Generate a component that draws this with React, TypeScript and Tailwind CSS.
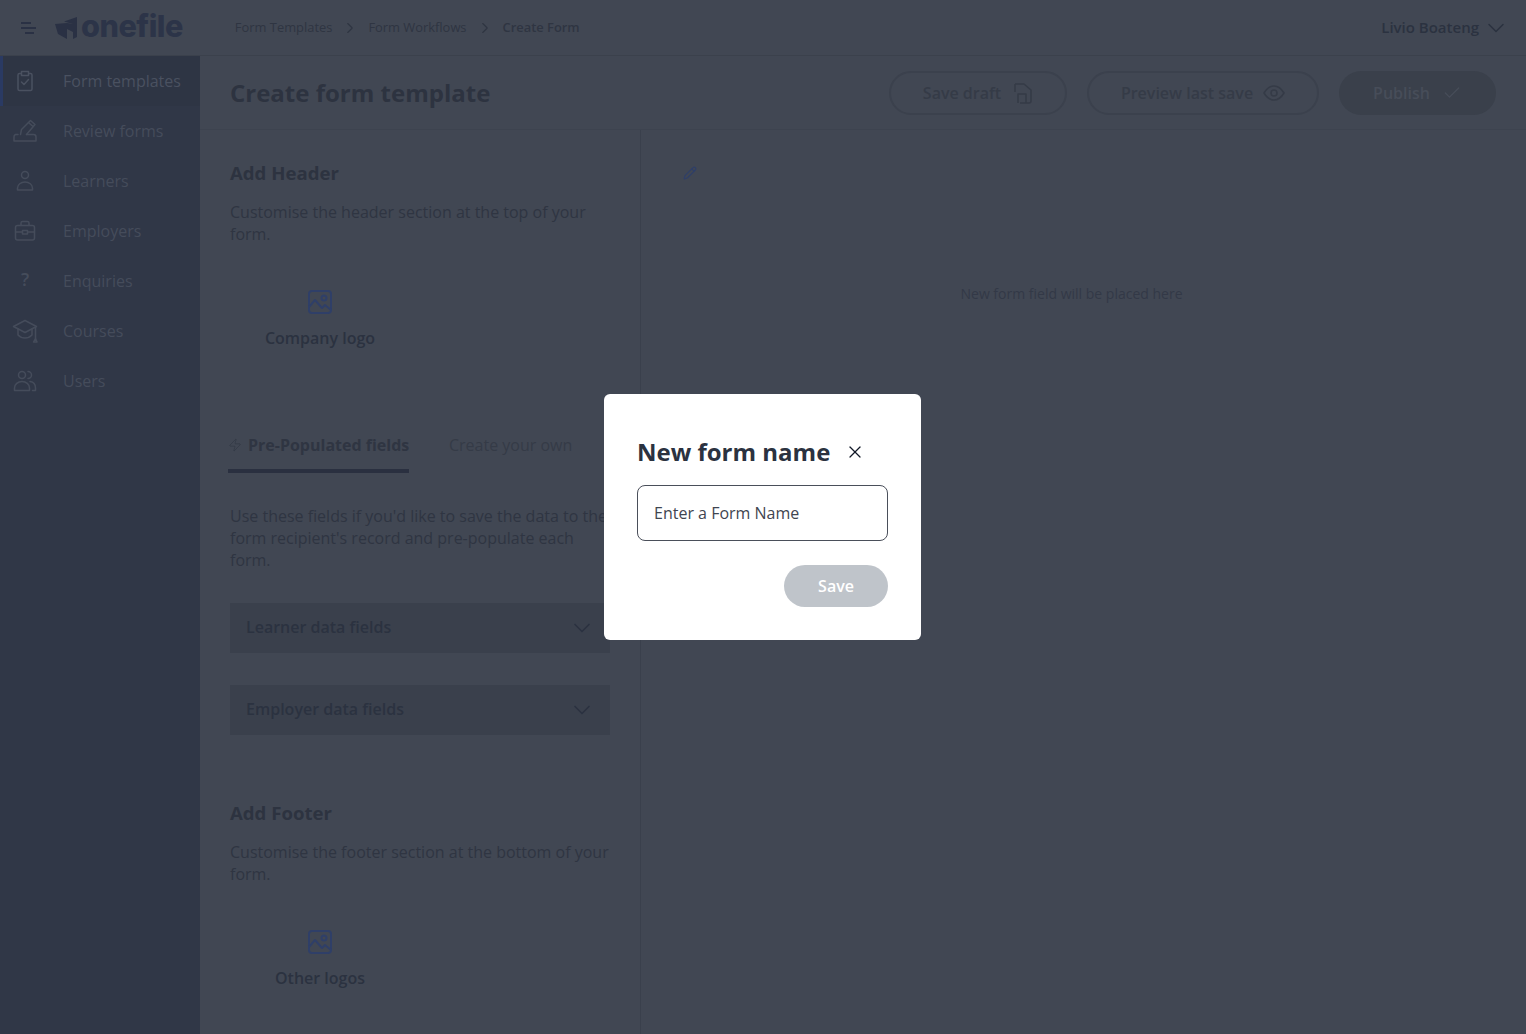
import React from 'react';
import { Check, ChevronDown, ChevronRight, Pencil, X, Zap } from 'lucide-react';

const navItems = [
  { label: 'Form templates', icon: <ClipboardIcon />, active: true },
  { label: 'Review forms', icon: <ReviewIcon />, active: false },
  { label: 'Learners', icon: <LearnerIcon />, active: false },
  { label: 'Employers', icon: <BriefcaseIcon />, active: false },
  { label: 'Enquiries', icon: <span className="mt-[-4px] text-[18px] font-semibold leading-none">?</span>, active: false },
  { label: 'Courses', icon: <CapIcon />, active: false },
  { label: 'Users', icon: <UsersIcon />, active: false },
];

function ClipboardIcon() {
  return (
    <svg width="24" height="24" viewBox="0 0 24 24" fill="none" stroke="currentColor" strokeWidth="1.5" strokeLinejoin="round" strokeLinecap="round">
      <path d="M8 4.500H6.500A1.500 1.500 0 0 0 5 6v14a1.500 1.500 0 0 0 1.500 1.500h11A1.500 1.500 0 0 0 19 20V6a1.500 1.500 0 0 0-1.500-1.500H16" />
      <path d="M8.500 2.500h7V6.500h-7z" />
      <path d="M8.500 13l2.500 2.500 4.500-5" />
    </svg>
  );
}

function ReviewIcon() {
  return (
    <svg width="24" height="24" viewBox="0 0 24 24" fill="none" stroke="currentColor" strokeWidth="1.5" strokeLinejoin="round" strokeLinecap="round">
      <path d="M7.500 15.500l1-5L17.500 1.500l4.500 4-8.500 10" />
      <path d="M15.500 3.500l4.500 4" />
      <path d="M5 15.500H2.500a2.500 2.500 0 0 0-1.500 2.500V22h22v-4a2.500 2.500 0 0 0-2.500-2.500h-7" />
    </svg>
  );
}

function LearnerIcon() {
  return (
    <svg width="24" height="24" viewBox="0 0 24 24" fill="none" stroke="currentColor" strokeWidth="1.5" strokeLinejoin="round">
      <circle cx="12" cy="6" r="3.500" />
      <path d="M4.500 21v-2a7.500 6 0 0 1 15 0v2z" />
    </svg>
  );
}

function BriefcaseIcon() {
  return (
    <svg width="24" height="24" viewBox="0 0 24 24" fill="none" stroke="currentColor" strokeWidth="1.5" strokeLinejoin="round" strokeLinecap="round">
      <rect x="2.500" y="6.500" width="19" height="14.500" rx="2" />
      <path d="M8 6.500V4a1.500 1.500 0 0 1 1.500-1.500h5A1.500 1.500 0 0 1 16 4v2.500" />
      <path d="M2.500 13h6.500M15 13h6.500" />
      <path d="M9.500 11.500h5v3.500h-5z" />
    </svg>
  );
}

function CapIcon() {
  return (
    <svg width="26" height="26" viewBox="0 0 26 26" fill="none" stroke="currentColor" strokeWidth="1.5" strokeLinejoin="round" strokeLinecap="round">
      <path d="M13 2.500 1.500 8.500 13 14.500l11.500-6z" />
      <path d="M6 11v6c2 2 4.500 3 7 3s5-1 7-3v-6" />
      <path d="M23.500 9.500v11" />
      <path d="M21.500 24l2-3.500 1.500 3.500z" />
    </svg>
  );
}

function UsersIcon() {
  return (
    <svg width="24" height="24" viewBox="0 0 24 24" fill="none" stroke="currentColor" strokeWidth="1.5" strokeLinejoin="round" strokeLinecap="round">
      <circle cx="9" cy="6" r="3.500" />
      <path d="M15 2.500a3.500 3.500 0 0 1 0 7" />
      <path d="M1.500 21.500V19a7.500 6.500 0 0 1 15 0v2.500z" />
      <path d="M17 12.500c3.500.5 5.500 3 5.500 6.500v2.500h-3" />
    </svg>
  );
}

function Logo() {
  return (
    <div className="flex items-center">
      <svg width="24" height="22" viewBox="0 0 24 22" className="mr-[2px]">
        <path d="M0 7l12-1v16L3 17z" fill="#2a3144" />
        <path d="M9 4.500 22 0v20l-4 2V7z" fill="#2a3144" />
        <path d="M12 6l6 1v8l-6-3z" fill="#2a3144" />
      </svg>
      <span className="mt-[-2px] text-[30.600px] font-extrabold leading-none tracking-[-0.5px] text-[#2c3448] [font-family:Inter,sans-serif]">onefile</span>
    </div>
  );
}

function ImageIcon() {
  return (
    <svg width="26" height="26" viewBox="0 0 26 26" fill="none" stroke="#2f3f68" strokeWidth="2" strokeLinejoin="round">
      <rect x="2" y="2" width="22" height="22" rx="3" />
      <circle cx="17" cy="9" r="2.500" />
      <path d="M2 18l6-7 7 8 3-3 6 5" />
    </svg>
  );
}

function DraftIcon() {
  return (
    <svg width="20" height="22" viewBox="0 0 20 22" fill="none" stroke="currentColor" strokeWidth="1.600" strokeLinejoin="round">
      <path d="M2 2h9l7 6v11a2 2 0 0 1-2 2H7" />
      <path d="M5 21V12h8v9" />
      <path d="M2 2v8" />
    </svg>
  );
}

function EyeIcon() {
  return (
    <svg width="22" height="18" viewBox="0 0 22 18" fill="none" stroke="currentColor" strokeWidth="1.600">
      <path d="M1 9c3-5 6-7 10-7s7 2 10 7c-3 5-6 7-10 7S4 14 1 9z" />
      <circle cx="11" cy="9" r="3" />
    </svg>
  );
}

function Accordion({ label }: { label: string }) {
  return (
    <div className="flex h-[50px] w-[380px] items-center justify-between bg-[#3a404c] pl-4 pr-[14px]">
      <span className="mt-[-2px] font-semibold text-[#2b3240]">{label}</span>
      <ChevronDown size={28} strokeWidth={1.500} className="text-[#2b3240]" />
    </div>
  );
}

export default function App() {
  return (
    <div className="relative flex h-[1034px] w-[1526px] flex-col overflow-hidden bg-[#414753] text-[16px] text-[#2f3542] [font-family:'Open_Sans',sans-serif]">
      <header className="flex h-[56px] shrink-0 items-center border-b border-[#3b414c] pl-5 pr-[16px]">
        <svg width="16" height="14" viewBox="0 0 16 14" stroke="#2a3144" strokeWidth="2" className="mr-[19px]">
          <path d="M1 2h10M1 7h15M5 12h9" />
        </svg>
        <Logo />
        <nav className="ml-[52px] mt-[1px] flex items-center text-[12.900px] text-[#2f3542]">
          <span>Form Templates</span>
          <ChevronRight size={18} strokeWidth={1.500} className="mx-[9px]" />
          <span>Form Workflows</span>
          <ChevronRight size={18} strokeWidth={1.500} className="mx-[9px]" />
          <span className="font-semibold">Create Form</span>
        </nav>
        <div className="ml-auto flex items-center gap-[3px] text-[15px] font-semibold text-[#2b3240]">
          Livio Boateng
          <ChevronDown size={28} strokeWidth={1.300} />
        </div>
      </header>

      <div className="flex min-h-0 flex-1">
        <aside className="w-[200px] shrink-0 bg-[#303747]">
          {navItems.map((item) => (
            <div
              key={item.label}
              className={
                item.active
                  ? 'flex h-[50px] items-center border-l-[3px] border-[#2a3a63] bg-[#2e3544] text-[#4a5160]'
                  : 'flex h-[50px] items-center border-l-[3px] border-transparent text-[#454c5b]'
              }
            >
              <span className="flex w-[44px] justify-center">{item.icon}</span>
              <span className="ml-[16px]">{item.label}</span>
            </div>
          ))}
        </aside>

        <main className="flex min-w-0 flex-1 flex-col">
          <div className="flex h-[74px] shrink-0 items-center justify-between border-b border-[#3d434f] pl-[30px] pr-[30px]">
            <h1 className="mt-[1px] text-[24px] font-bold text-[#2d3340]">Create form template</h1>
            <div className="flex items-center gap-5 font-semibold text-[#353b47]">
              <button className="flex h-[44px] w-[178px] items-center justify-center gap-[12px] rounded-full border-2 border-[#3b414d]">
                Save draft
                <DraftIcon />
              </button>
              <button className="flex h-[44px] w-[232px] items-center justify-center gap-[10px] rounded-full border-2 border-[#3b414d]">
                Preview last save
                <EyeIcon />
              </button>
              <button className="flex h-[44px] w-[157px] items-center justify-center gap-3 rounded-full bg-[#3a404b] text-[#474d59]">
                Publish
                <Check size={20} strokeWidth={1.500} />
              </button>
            </div>
          </div>

          <div className="flex min-h-0 flex-1">
            <section className="w-[441px] shrink-0 border-r border-[#3a404c] pl-[30px]">
              <h2 className="mt-[28px] text-[18.600px] font-bold leading-[30px] text-[#2d3340]">Add Header</h2>
              <p className="mt-[13px] w-[380px] leading-[22px]">Customise the header section at the top of your form.</p>
              <div className="mt-[44px] flex w-[180px] flex-col items-center">
                <ImageIcon />
                <span className="mt-[11px] font-semibold text-[#2b3240]">Company logo</span>
              </div>

              <div className="mt-[75px] ml-[-2px] flex h-[48px] items-start pt-[8px]">
                <div className="flex h-[40px] w-[181px] items-start whitespace-nowrap border-b-[4px] border-[#2a3040] font-bold text-[#2f3542]">
                  <Zap size={14} strokeWidth={1} className="mr-[6px] mt-[5px] shrink-0" />
                  Pre-Populated fields
                </div>
                <span className="ml-10 text-[#353b47]">Create your own</span>
              </div>

              <p className="mt-[32px] w-[380px] leading-[22px]">Use these fields if you'd like to save the data to the form recipient's record and pre-populate each form.</p>
              <div className="mt-[32px] flex flex-col gap-[32px]">
                <Accordion label="Learner data fields" />
                <Accordion label="Employer data fields" />
              </div>

              <h2 className="mt-[63px] text-[18.600px] font-bold leading-[30px] text-[#2d3340]">Add Footer</h2>
              <p className="mt-[13px] w-[380px] leading-[22px]">Customise the footer section at the bottom of your form.</p>
              <div className="mt-[44px] flex w-[180px] flex-col items-center">
                <ImageIcon />
                <span className="mt-[11px] font-semibold text-[#2b3240]">Other logos</span>
              </div>
            </section>

            <section className="flex-1 pl-[42px] pt-[36px]">
              <Pencil size={14} strokeWidth={2} className="text-[#2f3f68]" />
              <p className="ml-[-1px] mt-[103px] w-[779px] text-center text-[14px] text-[#333947]">New form field will be placed here</p>
            </section>
          </div>
        </main>
      </div>

      <div className="fixed inset-0 flex items-center justify-center pr-[1px]">
        <div className="w-[317px] rounded-[6px] bg-white px-[33px] pb-[33px] pt-[40px] text-[#2b3240]">
          <div className="flex items-center">
            <h2 className="text-[24px] font-bold leading-[36px]">New form name</h2>
            <X size={20} strokeWidth={1.500} className="ml-[15px] text-[#111827]" />
          </div>
          <div className="mt-[15px] flex h-[56px] items-center rounded-lg border border-[#4a4f5a] px-4 text-[#3f4550]">Enter a Form Name</div>
          <div className="mt-6 flex justify-end">
            <button className="h-[42px] w-[104px] rounded-full bg-[#bfc4ca] font-semibold text-white">Save</button>
          </div>
        </div>
      </div>
    </div>
  );
}
